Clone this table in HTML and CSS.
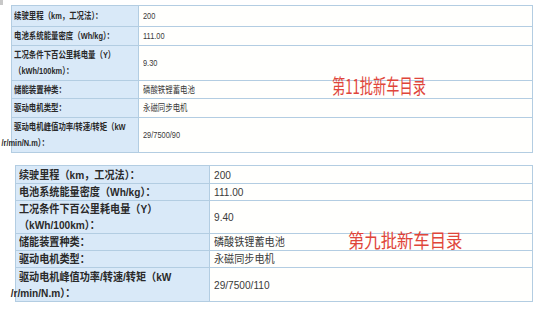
FILE: index.html
```html
<!DOCTYPE html>
<html lang="zh">
<head>
<meta charset="utf-8">
<link rel="stylesheet" href="styles.css">
</head>
<body>
<div class="page">
  <div class="corner"></div>
  <div class="block block-a">
    <table class="spec spec-a">
      <tr class="r1"><td class="k"><span class="sq">续驶里程（km，工况法）：</span></td><td class="v"><span class="sq">200</span></td></tr>
      <tr class="r2"><td class="k"><span class="sq">电池系统能量密度（Wh/kg）：</span></td><td class="v"><span class="sq">111.00</span></td></tr>
      <tr class="r3"><td class="k"><span class="sq">工况条件下百公里耗电量（Y）<br>（kWh/100km）：</span></td><td class="v"><span class="sq">9.30</span></td></tr>
      <tr class="r4"><td class="k"><span class="sq">储能装置种类：</span></td><td class="v"><span class="sq">磷酸铁锂蓄电池</span></td></tr>
      <tr class="r5"><td class="k"><span class="sq">驱动电机类型：</span></td><td class="v"><span class="sq">永磁同步电机</span></td></tr>
      <tr class="r6"><td class="k"><span class="sq">驱动电机峰值功率/转速/转矩（kW<span class="out">/r/min/N.m）：</span></span></td><td class="v"><span class="sq">29/7500/90</span></td></tr>
    </table>
    <div class="tag tag-a">第11批新车目录</div>
  </div>
  <div class="block block-b">
    <table class="spec spec-b">
      <tr class="r1"><td class="k"><span class="sq">续驶里程（km，工况法）：</span></td><td class="v"><span class="sq">200</span></td></tr>
      <tr class="r2"><td class="k"><span class="sq">电池系统能量密度（Wh/kg）：</span></td><td class="v"><span class="sq">111.00</span></td></tr>
      <tr class="r3"><td class="k"><span class="sq">工况条件下百公里耗电量（Y）<br>（kWh/100km）：</span></td><td class="v"><span class="sq">9.40</span></td></tr>
      <tr class="r4"><td class="k"><span class="sq">储能装置种类：</span></td><td class="v"><span class="sq">磷酸铁锂蓄电池</span></td></tr>
      <tr class="r5"><td class="k"><span class="sq">驱动电机类型：</span></td><td class="v"><span class="sq">永磁同步电机</span></td></tr>
      <tr class="r6"><td class="k"><span class="sq">驱动电机峰值功率/转速/转矩（kW<span class="out">/r/min/N.m）：</span></span></td><td class="v"><span class="sq">29/7500/110</span></td></tr>
    </table>
    <div class="tag tag-b">第九批新车目录</div>
  </div>
</div>
</body>
</html>
```

FILE: styles.css
```css
html, body {
  margin: 0;
  padding: 0;
  background: #ffffff;
}
body {
  width: 554px;
  height: 312px;
  overflow: hidden;
  font-family: "Liberation Sans", "Noto Sans CJK SC", sans-serif;
}
.page {
  position: relative;
  width: 554px;
  height: 312px;
}
.corner {
  position: absolute;
  left: 0;
  top: 0;
  width: 3px;
  height: 5px;
  background: #c8c8c8;
}
.block {
  position: relative;
}
.block-a {
  padding: 5px 0 0 11px;
}
.block-b {
  padding: 12px 0 0 15px;
}
.spec {
  border-collapse: collapse;
  table-layout: fixed;
}
.spec td {
  border: 1px solid #b3cde2;
  padding: 0 4px;
  vertical-align: middle;
  white-space: nowrap;
}
.spec .k {
  background: #d9e9f8;
  color: #2a2a2a;
  font-weight: bold;
}
.spec .v {
  color: #3a3a3a;
  background: #fffffd;
}
.sq {
  display: inline-block;
  transform-origin: left center;
}
.out {
  display: block;
}

.spec-a {
  width: 522px;
  font-size: 9.5px;
  line-height: 16px;
}
.spec-a .sq {
  transform: scaleX(0.78);
}
.spec-a .k {
  width: 120px;
  padding-left: 2px;
}
.spec-a .v {
  padding-left: 4px;
}
.spec-a .r1 td { height: 20px; }
.spec-a .r2 td { height: 18px; }
.spec-a .r3 td { height: 34px; }
.spec-a .r4 td { height: 17px; }
.spec-a .r5 td { height: 18px; }
.spec-a .r6 td { height: 34px; }
.spec-a .out { margin-left: -16px; }

.spec-b {
  width: 518px;
  font-size: 11px;
  line-height: 16px;
}
.spec-b .sq {
  transform: scaleX(0.92);
}
.spec-b .k {
  width: 186px;
  padding-left: 3px;
}
.spec-b .v {
  padding-left: 4px;
}
.spec-b .r1 td { height: 17px; }
.spec-b .r2 td { height: 15px; }
.spec-b .r3 td { height: 32px; }
.spec-b .r4 td { height: 16px; }
.spec-b .r5 td { height: 16px; }
.spec-b .r6 td { height: 33px; }
.spec-b .out { margin-left: -9px; }

.tag {
  position: absolute;
  color: #e0453a;
  font-family: "Noto Sans CJK SC", sans-serif;
  white-space: nowrap;
  transform-origin: left top;
}
.tag-a {
  left: 332px;
  top: 75px;
  font-size: 20px;
  line-height: 22px;
  transform: scaleX(0.66);
}
.tag-b {
  left: 348px;
  top: 76px;
  font-size: 19px;
  line-height: 21px;
  transform: scaleX(0.86);
}
```
